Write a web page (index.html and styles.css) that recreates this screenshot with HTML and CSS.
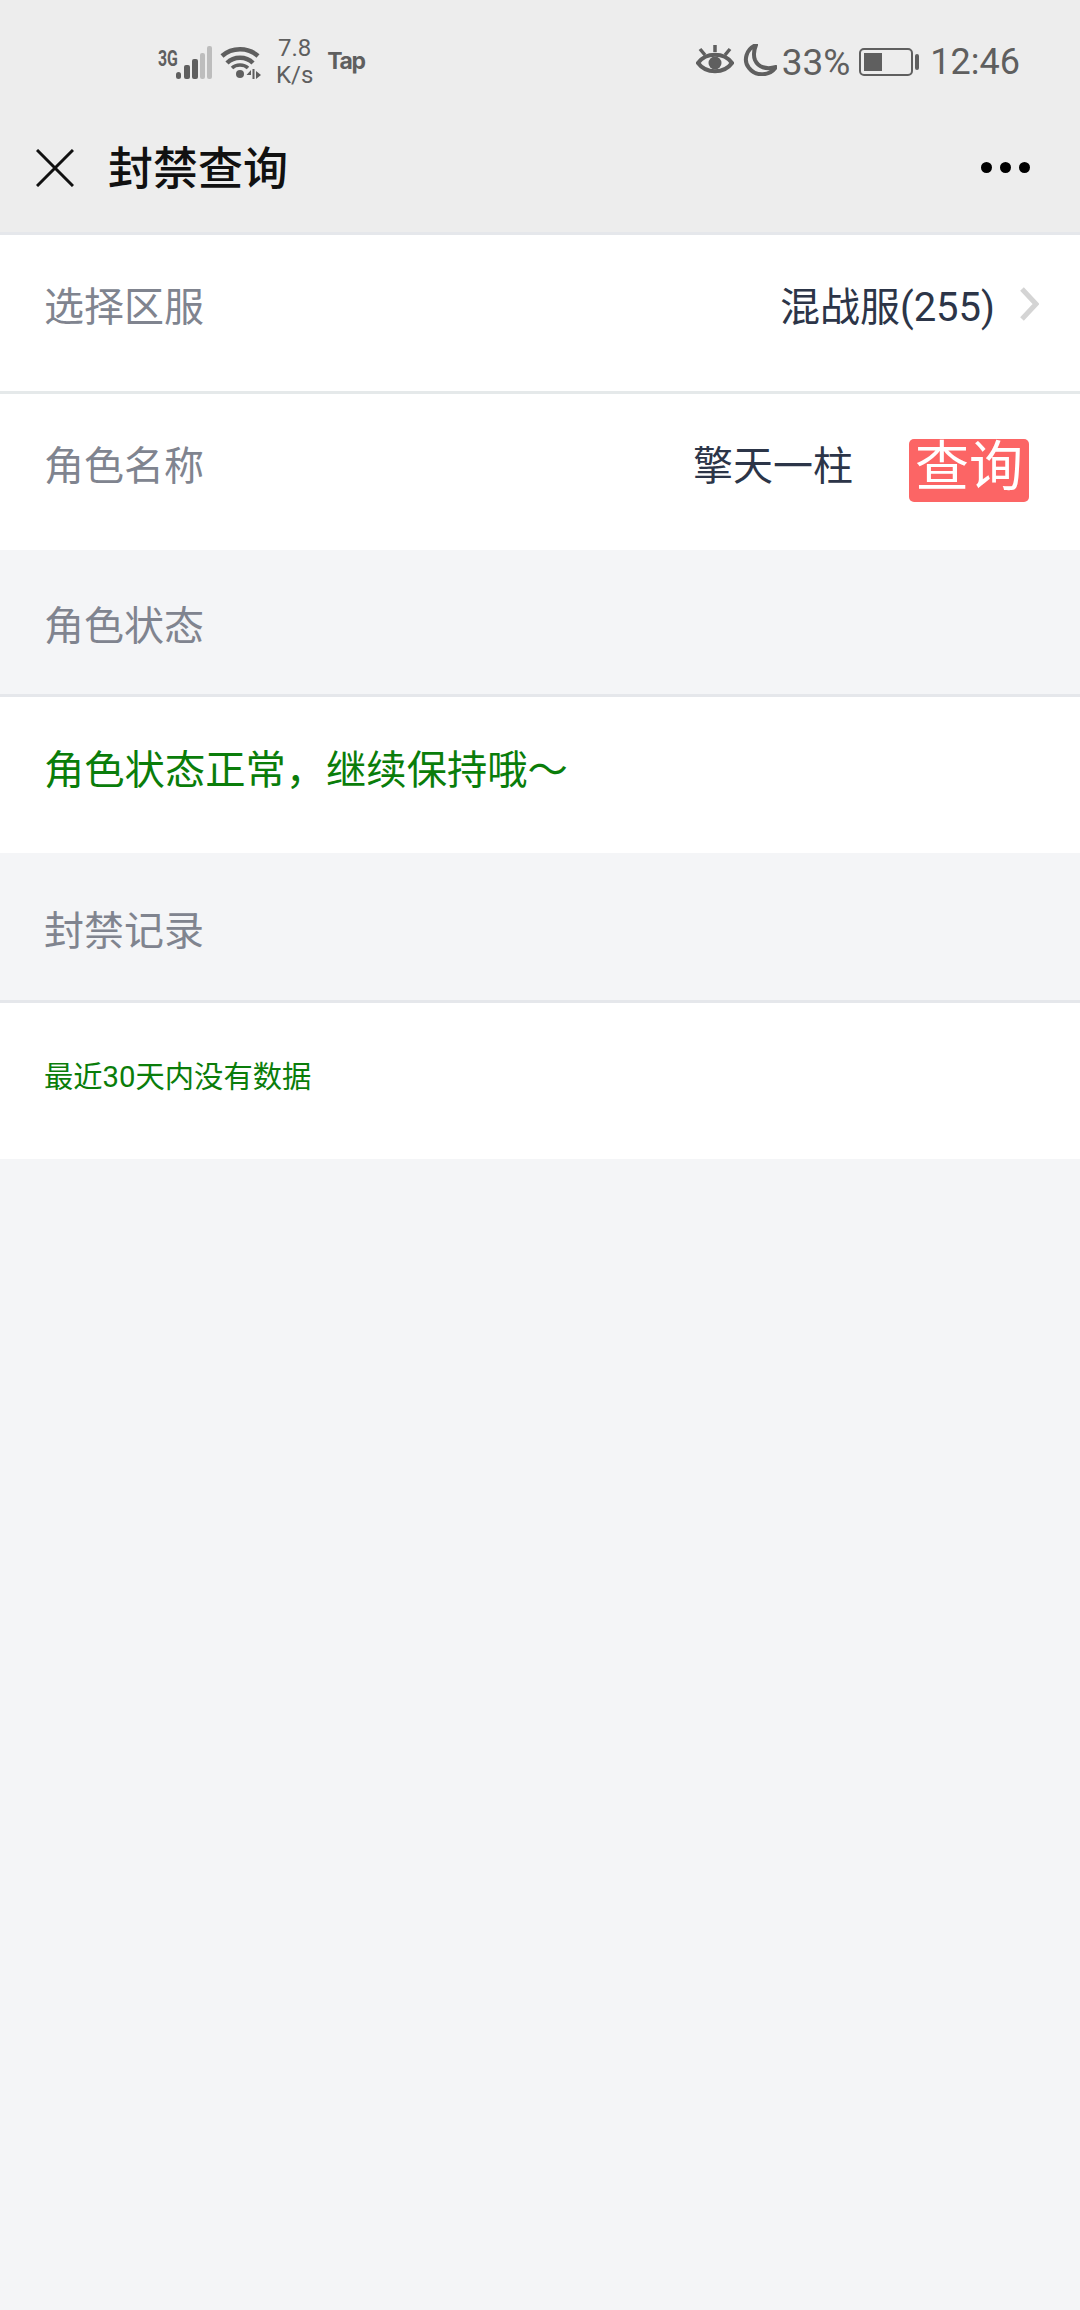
FILE: index.html
```html
<!DOCTYPE html>
<html lang="zh-CN">
<head>
	<meta charset="UTF-8">
	<title>封禁查询</title>
	<link rel="stylesheet" href="styles.css">
</head>
<body>
	<div class="header">
		<!-- 状态栏 -->
		<div class="status">
			<div class="status-left">
				<span class="net">3G</span>
				<svg class="signal" width="36" height="34" viewBox="0 0 36 34">
					<rect x="0" y="26" width="5" height="7" rx="2.5" fill="#5f5f5f"/>
					<rect x="8" y="19" width="6" height="14" rx="2" fill="#5f5f5f"/>
					<rect x="16" y="13" width="6" height="20" rx="2" fill="#5f5f5f"/>
					<rect x="24" y="7" width="5" height="26" rx="2" fill="#bdbdbd"/>
					<rect x="31" y="0" width="5" height="33" rx="2" fill="#bdbdbd"/>
				</svg>
				<svg class="wifi" width="42" height="34" viewBox="0 0 42 34">
					<path d="M2 10C12 1 28 1 38 10" fill="none" stroke="#5f5f5f" stroke-width="4.5"/>
					<path d="M7 17C14 10 26 10 33 17" fill="none" stroke="#5f5f5f" stroke-width="4.5"/>
					<path d="M12 22C16 18 24 18 28 22" fill="none" stroke="#5f5f5f" stroke-width="3.5"/>
					<circle cx="20" cy="28" r="4" fill="#5f5f5f"/>
					<path d="M31 24l-4.500 5h4.500zM32.500 23h2v10h-2zM36 25l5 4-5 4z" fill="#5f5f5f"/>
				</svg>
				<div class="speed">7.8<br>K/s</div>
				<span class="tap">Tap</span>
			</div>
			<div class="status-right">
				<svg class="eye" width="38" height="32" viewBox="0 0 38 32">
					<path d="M2 19C10 8 28 8 36 19C28 30 10 30 2 19Z" fill="none" stroke="#5f5f5f" stroke-width="4"/>
					<circle cx="19" cy="19" r="6.500" fill="#5f5f5f"/>
					<path d="M19 1v7M4 5l5 6M34 5l-5 6" stroke="#5f5f5f" stroke-width="3.500" fill="none"/>
				</svg>
				<svg class="moon" width="34" height="32" viewBox="0 0 34 32">
					<path d="M13 1C3 5 0 17 6 24C13 33 27 32 33 23C23 26 15 23 12 16C10 11 11 6 13 1Z" fill="none" stroke="#5f5f5f" stroke-width="4" stroke-linejoin="round"/>
				</svg>
				<span class="percent">33%</span>
				<div class="battery"><div class="battery-level"></div></div>
				<div class="battery-tip"></div>
				<span class="time">12:46</span>
			</div>
		</div>
		<!-- 标题栏 -->
		<div class="titlebar">
			<svg class="close" width="38" height="38" viewBox="0 0 38 38">
				<path d="M1 1L37 37M37 1L1 37" stroke="#111" stroke-width="3" fill="none"/>
			</svg>
			<h1>封禁查询</h1>
			<div class="more"><i></i><i></i><i></i></div>
		</div>
	</div>

	<div class="row border">
		<span class="label">选择区服</span>
		<span class="value">混战服(255)</span>
		<svg class="arrow" width="20" height="34" viewBox="0 0 20 34">
			<path d="M3 2L17 17L3 32" stroke="#d4d4d4" stroke-width="5" fill="none"/>
		</svg>
	</div>
	<div class="row">
		<span class="label">角色名称</span>
		<span class="value name">擎天一柱</span>
		<a href="javascript:;" class="btn">查询</a>
	</div>

	<div class="section">角色状态</div>
	<div class="row info">角色状态正常，继续保持哦～</div>

	<div class="section tall">封禁记录</div>
	<div class="row info small">最近30天内没有数据</div>
</body>
</html>
```

FILE: styles.css
```css
*{padding:0;margin:0;box-sizing:border-box;}
html,body{height:100%;}
body{background:#f4f5f7;font-family:"Roboto","Noto Sans CJK SC",sans-serif;}

.header{background:#ededed;height:235px;border-bottom:3px solid #e5e7eb;}

.status{height:104px;padding:20px 60px 0 158px;display:flex;justify-content:space-between;align-items:center;color:#5f5f5f;}
.status-left,.status-right{display:flex;align-items:center;}
.net{font-size:22px;font-weight:700;width:18px;transform:scaleX(.72);transform-origin:left center;margin-top:-8px;}
.signal{margin-top:1px;}
.wifi{margin-left:8px;margin-top:1px;}
.speed{font-size:24px;line-height:27px;text-align:center;margin-left:14px;}
.tap{font-family:"Inter",sans-serif;font-size:23px;font-weight:700;letter-spacing:-1.5px;margin-left:14px;margin-top:-3px;}
.eye{margin-right:9px;margin-top:-4px;}
.moon{margin-right:5px;margin-top:-4px;}
.percent{font-size:37px;}
.battery{width:54px;height:28px;border:2px solid #5f5f5f;border-radius:5px;margin-left:9px;padding:3px;}
.battery-level{width:18px;height:100%;background:#5f5f5f;}
.battery-tip{width:4px;height:16px;background:#5f5f5f;border-radius:2px;margin-left:2px;}
.time{font-size:36px;margin-left:11px;}

.titlebar{height:128px;display:flex;align-items:center;padding:0 50px 0 36px;}
.close{flex:none;}
.titlebar h1{font-size:45px;font-weight:500;color:#111;margin:-5px 0 0 34px;flex:1;}
.more{display:flex;gap:8px;margin-top:-2px;}
.more i{width:11px;height:11px;border-radius:50%;background:#000;}

.row{height:156px;background:#fff;display:flex;align-items:center;padding:0 44px 18px;font-size:40px;}
.row.border{height:159px;border-bottom:3px solid #e5e9ea;}
.label{color:#80848f;flex:1;}
.value{color:#2c3548;}
.arrow{margin-left:24px;margin-right:-3px;}
.name{margin-right:56px;}
.btn{width:120px;height:63px;background:#fc6565;color:#fff;border-radius:5px;font-size:54px;line-height:58px;text-align:center;text-decoration:none;margin-right:7px;margin-top:14px;}

.section{height:147px;padding:2px 44px 0;display:flex;align-items:center;font-size:40px;color:#80848f;border-bottom:3px solid #e5e7eb;}
.section.tall{height:150px;}
.info{color:#0a7d0a;padding-bottom:18px;font-size:40.3px;}
.small{font-size:29.3px;padding-bottom:15px;}
```
